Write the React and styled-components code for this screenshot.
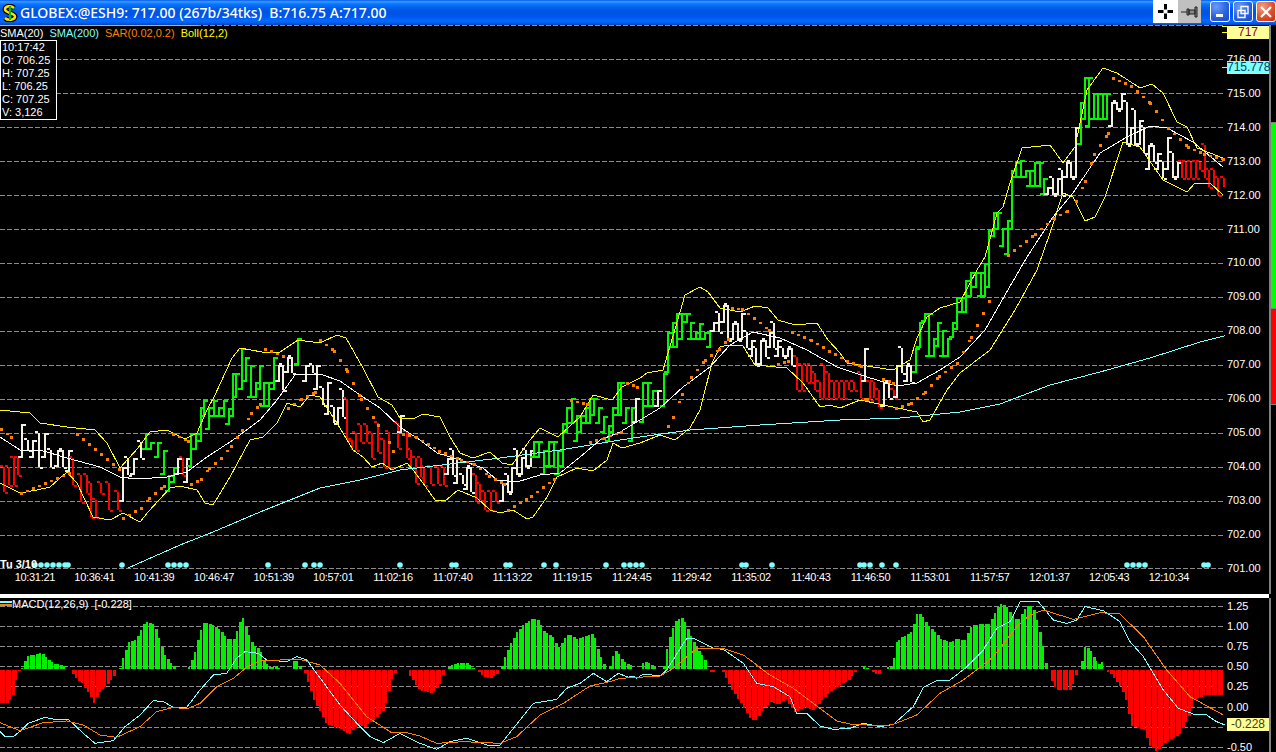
import styled, { createGlobalStyle } from "styled-components";

const GlobalStyle = createGlobalStyle`
  html, body { margin: 0; padding: 0; background: #000; }
  body { font-family: "Liberation Sans", Arial, sans-serif; overflow: hidden; }
`;

const RED = "#ff0000";
const GREEN = "#00f800";
const WHITE = "#f4f0e4";
const CYAN = "#80ffff";
const ORANGE = "#ff8000";
const YELLOW = "#ffff00";

// price bars: x,high,low in page pixels
const barRuns = [
  [RED, "3,467,492 8,467,485 13,458,485 17,458,475"],
  [WHITE, "21,424,458 27,440,450 32,440,458 38,433,467 44,433,458 50,450,467 57,450,467 62,450,467 68,450,472"],
  [RED, "72,458,485 80,475,502 86,475,493 90,483,517 95,500,517 100,483,493 108,483,510 117,492,510"],
  [WHITE, "122,467,502 127,458,475 133,458,475 140,442,458"],
  [GREEN, "145,433,450 150,442,450 157,442,458 163,450,475 168,475,492 173,467,483"],
  [WHITE, "177,458,475"],
  [RED, "182,458,475"],
  [WHITE, "186,458,483"],
  [GREEN, "190,433,467 195,433,450 200,407,442 203,400,417 208,407,430 213,400,417 218,407,417 223,400,417 228,408,425 232,373,417 235,373,398 241,348,390 245,357,382 250,365,398 255,382,398 259,365,390 263,382,407 268,382,407 273,357,390"],
  [WHITE, "278,365,382 282,365,390 287,357,373 291,357,373"],
  [GREEN, "297,338,365"],
  [WHITE, "305,365,382 312,365,373 316,365,390 322,388,405 327,382,415 333,407,423 337,407,425 342,390,417"],
  [RED, "346,399,440 351,440,450 355,433,450 360,425,442 366,425,442 371,433,458 377,423,452 383,440,467 388,432,467 397,423,448"],
  [WHITE, "400,415,433"],
  [RED, "406,432,458 410,450,468 415,458,483 420,458,477 423,467,485 430,467,484 437,467,484 443,467,485"],
  [WHITE, "447,458,475 452,450,475 456,458,484 462,475,484 466,467,490 470,467,492"],
  [RED, "475,475,502 479,484,500 484,492,510 490,492,510 495,492,502"],
  [WHITE, "502,483,502 507,475,493 511,467,493 516,450,475 521,457,475 525,450,467 530,450,467"],
  [GREEN, "533,441,458 538,441,458 543,450,475 548,441,467 553,441,467 557,450,475 562,423,467 566,407,433 571,398,424 576,415,442 580,415,433 585,407,424 589,398,424 593,398,416 598,407,424 603,416,433 608,425,442 612,407,433 617,382,416 620,382,416 625,407,424 631,407,442"],
  [WHITE, "635,398,423"],
  [GREEN, "642,382,423 647,382,407 652,390,407"],
  [WHITE, "657,390,407"],
  [GREEN, "663,373,407 667,332,373 672,322,348 676,313,348 681,313,340 686,313,323 690,322,340 695,332,340 699,323,340 704,332,340 709,330,348"],
  [WHITE, "713,322,332 718,313,332 723,305,323 727,305,340 732,323,340 737,323,340 741,313,340 746,332,348 751,340,357 755,348,365 760,340,365 765,340,357 769,332,348 773,323,348 777,340,357 782,348,357 787,348,357 791,348,365"],
  [RED, "796,357,390 801,365,390 806,365,382 810,365,382 814,373,390 819,382,398 823,365,398 828,373,398 833,382,398 838,382,398 843,382,398 848,382,390 853,382,390 860,373,398"],
  [WHITE, "864,348,382"],
  [RED, "869,382,400 873,382,398 878,390,407"],
  [WHITE, "883,382,407 888,382,398"],
  [RED, "893,390,398"],
  [WHITE, "896,365,398 901,348,373 906,365,382 910,365,382"],
  [GREEN, "915,348,373 919,322,348 924,313,322 928,313,357 933,338,357 937,322,347 942,330,357 947,338,357 952,322,338 956,297,330 961,297,313 965,280,313 970,272,297 975,272,288 980,272,297 984,263,297 988,230,288 993,212,237 997,212,230 1002,228,247 1007,220,255 1011,170,230 1015,162,178 1020,160,178 1025,170,178 1029,170,187 1034,162,187 1039,162,187 1043,178,195"],
  [WHITE, "1047,187,195 1052,178,195 1057,178,195 1061,170,195 1066,162,178 1070,162,178 1075,127,178"],
  [GREEN, "1080,102,145 1084,77,120 1088,77,127 1093,93,120 1097,93,120 1102,93,120 1106,93,120"],
  [WHITE, "1111,102,127 1116,102,110 1121,93,110 1126,102,145 1130,127,145 1134,110,145 1139,120,145 1143,127,153 1148,145,170 1153,145,162 1157,153,170 1162,162,178 1167,137,170 1172,153,178 1177,162,178"],
  [RED, "1181,162,178 1185,162,178 1190,162,178 1195,162,178 1199,162,170 1204,145,178 1208,170,187 1213,170,187 1217,178,195 1223,178,187"],
];

const sma200 = "128,568 180,545 213,532 260,512 320,488 360,480 400,470 450,464 500,458 560,450 620,440 640,437 690,430 760,425 840,420 900,418 960,412 1000,404 1050,385 1100,372 1150,358 1200,342 1228,335";
const sma20 = "0,437 20,450 40,450 67,458 100,467 120,477 137,479 167,477 187,472 207,457 233,440 260,420 277,400 295,375 320,374 340,381 360,395 380,408 400,427 420,440 437,453 460,460 483,468 497,480 517,482 540,475 560,473 580,457 600,440 620,432 640,420 660,408 683,387 710,367 730,345 753,332 780,338 807,350 837,367 867,377 897,386 917,383 940,370 960,357 985,330 1005,295 1027,257 1053,217 1073,193 1100,153 1127,137 1150,126 1167,128 1193,142 1223,167";
const bollUpper = "0,410 30,413 40,423 67,427 95,430 107,443 120,468 138,448 150,432 167,430 185,439 197,433 207,410 215,395 232,358 240,348 262,352 280,352 298,340 320,343 337,335 346,338 363,368 378,397 392,405 400,418 415,418 423,414 440,417 450,437 460,453 473,458 490,452 502,463 512,465 530,440 540,428 558,437 580,417 593,395 612,400 622,387 640,378 647,373 663,370 685,295 700,287 708,292 720,308 740,312 755,306 768,308 778,320 795,325 817,323 828,340 840,353 847,363 893,370 910,360 917,338 927,317 940,308 960,302 977,270 985,257 997,213 1003,207 1010,183 1022,148 1050,145 1063,163 1075,147 1087,90 1103,68 1117,73 1140,88 1152,84 1163,93 1177,122 1187,127 1197,148 1223,158";
const bollLower = "0,483 20,493 37,490 50,487 67,472 77,483 93,517 110,520 123,513 140,522 148,512 170,488 180,486 197,490 205,503 213,505 230,477 250,440 263,437 277,423 287,403 300,407 310,395 320,397 337,423 353,450 363,457 372,467 382,463 392,470 407,463 413,470 423,483 435,500 445,501 458,490 477,498 490,510 500,513 513,510 527,519 533,517 547,497 557,477 577,468 593,471 607,460 613,443 622,448 640,443 660,435 675,440 690,428 700,410 712,363 720,347 728,345 743,346 755,365 787,368 803,383 820,407 830,405 840,408 860,400 893,407 917,412 923,422 930,420 947,390 960,373 990,350 1015,310 1037,270 1050,233 1063,193 1073,197 1085,221 1095,217 1105,197 1123,142 1140,147 1163,180 1187,192 1195,183 1210,183 1223,195";

const sarRuns = [
  "0,428 10,436", "20,492 68,472", "76,433 118,468", "122,517 140,507 148,497 163,485", "172,433 187,440",
  "190,483 200,478 208,467 220,457 230,445 241,429 250,412 259,403", "264,348 282,355", "287,407 300,398 314,391",
  "319,339 333,350 346,370 360,398 377,424", "388,441 392,450", "402,433 415,436 438,450 460,459 473,463 488,475 503,483",
  "507,509 530,495 553,478", "570,399 586,403", "589,441 603,437 620,431", "626,382 636,386",
  "667,425 672,416 681,393 690,376 704,359 718,348 727,338", "731,307 741,308 753,317 768,329", "777,363 787,360",
  "791,331 810,339 828,350 846,360 860,365", "864,398 866,398", "882,378 892,382",
  "895,407 910,402 924,391 938,375 956,362 970,336 988,300", "1007,254 1034,233 1053,217 1066,210",
  "1075,200 1084,180 1093,153 1107,132", "1112,77 1130,85 1149,102 1167,127 1187,146 1203,153 1222,158",
];

const histogram = "0,-33 8,-33 13,-27 17,-7 20,0 22,0 24,6 28,13 30,15 33,13 38,15 42,17 45,13 50,8 55,5 60,5 66,2 68,0 70,0 75,-7 82,-13 90,-25 94,-33 100,-22 108,-15 116,-5 118,0 120,0 122,3 125,15 130,27 137,30 145,45 148,47 155,45 160,30 165,15 172,5 178,0 188,0 190,3 195,15 200,35 205,47 212,45 220,40 228,30 235,30 240,47 243,52 247,40 253,25 260,20 265,7 270,2 278,3 280,0 292,0 295,12 300,3 302,0 305,0 315,-30 328,-55 340,-58 350,-65 358,-55 365,-57 375,-50 385,-40 392,-10 397,0 407,0 412,-8 420,-20 432,-23 440,-15 445,0 448,0 450,4 460,6 468,6 472,3 474,0 477,0 482,-5 488,-8 490,-9 498,-3 500,0 502,0 505,10 510,22 518,37 525,45 532,50 538,50 545,38 553,33 557,25 560,22 565,30 570,35 578,30 585,32 592,35 595,33 600,15 605,4 607,0 610,2 615,18 618,18 622,10 627,5 632,4 635,0 640,0 642,5 645,8 650,6 655,2 660,0 664,2 666,15 670,32 675,47 683,52 690,35 698,20 705,12 709,0 712,-2 716,-2 718,0 723,0 725,-5 733,-20 745,-38 752,-50 757,-50 765,-38 772,-32 780,-35 786,-28 795,-42 805,-38 815,-40 820,-33 830,-22 840,-15 850,-10 855,-2 858,0 862,0 863,3 866,3 868,0 870,0 875,-3 878,-5 880,-3 881,0 885,0 888,2 890,0 893,6 897,27 903,32 910,35 914,40 917,55 922,55 928,45 935,38 942,30 950,27 958,30 965,28 972,43 980,45 990,45 995,55 1000,65 1007,63 1015,50 1020,50 1025,60 1030,65 1035,58 1040,38 1045,15 1047,0 1050,0 1053,-15 1058,-20 1070,-20 1075,-10 1077,0 1079,0 1082,8 1085,22 1090,20 1095,10 1100,5 1103,7 1105,0 1107,0 1113,-5 1118,-12 1122,-18 1127,-30 1132,-55 1135,-57 1145,-60 1150,-75 1158,-82 1160,-78 1170,-70 1180,-65 1190,-45 1195,-30 1205,-25 1225,-25";

// read off 3x crops, so kept in crop coordinates
const macdLine = [
  [0, "0,425 15,440 40,440 65,420 85,400 135,382 165,388 205,388 250,430 285,460 340,452 375,410 420,375 460,332 490,335 520,352 560,352 600,300 640,255 680,250 710,205 735,185 775,190 800,210 860,215 890,200 920,210 950,250 1020,345 1080,410 1110,440 1150,458 1200,430 1260,460"],
  [420, "50,478 90,455 140,445 210,468 240,465 340,340 410,328 440,295 480,280 520,250 560,275 595,250 625,262 640,258 650,265 670,252 720,258 740,240 800,145 820,145 880,175 910,178 970,220 1010,280 1060,290 1110,320 1130,370 1160,370 1200,408 1240,418 1290,415"],
  [850, "40,400 90,410 130,403 190,350 220,292 260,272 300,270 345,235 400,180 440,115 480,95 510,35 565,35 610,90 650,100 680,90 705,50 760,62 810,95 840,155 880,200 940,300 985,355 1030,372 1070,375 1100,395 1125,405"],
];
const signalLine = [
  [0, "0,398 60,422 130,398 200,393 250,405 300,435 350,442 420,410 470,365 520,352 560,357 600,340 650,290 700,265 740,232 780,212 900,208 960,225 1020,280 1100,380 1175,428 1220,428 1260,438"],
  [420, "50,460 130,455 240,460 290,440 360,375 430,340 510,288 570,275 600,265 720,258 760,235 830,175 910,175 970,195 1050,255 1120,295 1200,355 1250,393 1290,402"],
  [850, "100,408 130,403 200,375 270,310 340,270 380,240 430,200 500,110 540,75 580,60 670,88 750,68 810,72 880,140 950,240 1020,320 1120,375"],
];

const markers = [35, 41, 47, 53, 59, 65, 68, 122, 168, 174, 180, 186, 268, 305, 314, 320, 400, 452, 456, 506, 510, 544, 556, 606, 624, 630, 636, 642, 742, 746, 772, 860, 864, 870, 882, 896, 1127, 1133, 1139, 1145, 1204, 1208];

const times = ["10:31:21", "10:36:41", "10:41:39", "10:46:47", "10:51:39", "10:57:01", "11:02:16", "11:07:40", "11:13:22", "11:19:15", "11:24:45", "11:29:42", "11:35:02", "11:40:43", "11:46:50", "11:53:01", "11:57:57", "12:01:37", "12:05:43", "12:10:34"];
const prices = ["716.00", "715.00", "714.00", "713.00", "712.00", "711.00", "710.00", "709.00", "708.00", "707.00", "706.00", "705.00", "704.00", "703.00", "702.00", "701.00"];
const priceGrid = [25, 59, 93, 127, 161, 195, 229, 263, 297, 331, 365, 399, 433, 467, 501, 535, 568];
const macdLabels = ["1.25", "1.00", "0.75", "0.50", "0.25", "0.00", "", "-0.50"];
const macdGrid = [606, 626, 646, 666, 686, 707, 727, 747];
const dataRows = ["10:17:42", "O: 706.25", "H: 707.25", "L: 706.25", "C: 707.25", "V: 3,126"];

const pairs = (s) => s.split(" ").map((p) => p.split(",").map(Number));
const fromCrop = (runs) =>
  runs.map(([ox, s]) => pairs(s).map(([x, y]) => `${ox + x / 3},${590 + y / 3}`).join(" ")).join(" ");

const sample = (s, step = 6) => {
  const pts = pairs(s);
  const out = [];
  for (let i = 0; i < pts.length - 1; i++) {
    const [x0, y0] = pts[i];
    const [x1, y1] = pts[i + 1];
    for (let x = x0; x < x1; x += step) out.push([x, y0 + ((y1 - y0) * (x - x0)) / (x1 - x0)]);
  }
  out.push(pts[pts.length - 1]);
  return out;
};

const histAt = (() => {
  const pts = pairs(histogram);
  return (x) => {
    for (let i = 0; i < pts.length - 1; i++) {
      if (x >= pts[i][0] && x <= pts[i + 1][0]) {
        const [x0, y0] = pts[i];
        const [x1, y1] = pts[i + 1];
        return x1 === x0 ? y0 : y0 + ((y1 - y0) * (x - x0)) / (x1 - x0);
      }
    }
    return 0;
  };
})();

const Frame = styled.div`
  width: 1276px;
  height: 752px;
  display: flex;
  flex-direction: column;
  background: #000;
  overflow: hidden;
`;

const TitleBar = styled.div`
  height: 25px;
  flex: none;
  display: flex;
  align-items: center;
  padding-left: 2px;
  background: linear-gradient(#0058ee 0%, #3593ff 6%, #288eff 10%, #127dff 14%, #036ffc 20%, #0262ee 30%, #0057e5 40%, #0054e3 50%, #0055eb 62%, #005bf5 72%, #026afe 82%, #0062ef 90%, #0052d6 96%, #0040ab 100%);
`;

const Title = styled.span`
  margin-left: 2px;
  color: #fff;
  font: 500 14px "Noto Sans", "Open Sans", sans-serif;
  white-space: pre;
  flex: 1;
`;

const ToolGroup = styled.div`
  display: flex;
  height: 24px;
  align-self: flex-start;
  margin-right: 9px;
`;

const ToolButton = styled.div`
  width: ${(p) => p.$w}px;
  display: flex;
  align-items: center;
  justify-content: center;
  background: ${(p) => p.$bg};
  border-bottom: 1px solid #555;
`;

const WinButton = styled.div`
  width: 20px;
  height: 21px;
  margin-right: 3px;
  border: 1px solid #fff;
  border-radius: 3px;
  box-sizing: border-box;
  display: flex;
  align-items: center;
  justify-content: center;
  align-self: flex-start;
  margin-top: 1px;
  background: ${(p) => (p.$close
    ? "radial-gradient(circle at 30% 25%, #f0a08a, #e0502c 55%, #c03010)"
    : "radial-gradient(circle at 30% 25%, #6d9cf5, #2a62de 55%, #1c48c4)")};
  &:last-child { margin-right: 0; }
`;

const Pane = styled.div`
  display: flex;
  flex: none;
  height: ${(p) => p.$h}px;
`;

const Plot = styled.div`
  position: relative;
  width: 1225px;
  flex: none;
  display: flex;
  flex-direction: column;
`;

const Chart = styled.svg`
  display: block;
  flex: none;
`;

const ToolStrip = styled.div`
  position: absolute;
  left: 0;
  top: 0;
  width: 198px;
  height: 1px;
  background: #b0b0b0;
`;

const Legend = styled.div`
  position: absolute;
  left: 0;
  top: 2px;
  display: flex;
  gap: 6px;
  font-size: 11px;
  line-height: 13px;
  white-space: pre;
`;

const LegendItem = styled.span`
  color: ${(p) => p.$color};
`;

const DataBox = styled.div`
  position: absolute;
  left: 0;
  top: 15px;
  width: 57px;
  height: 80px;
  border: 1px solid #fff;
  background: #000;
  color: #fff;
  font-size: 11px;
  line-height: 13px;
  padding-left: 1px;
  box-sizing: border-box;
`;

const DateTag = styled.span`
  position: absolute;
  left: 0;
  top: 533px;
  color: #fff;
  font-size: 11px;
  font-weight: bold;
  line-height: 13px;
`;

const TimeRow = styled.div`
  display: flex;
  padding-left: 5px;
  height: 24px;
`;

const TimeLabel = styled.span`
  flex: 0 0 59.7px;
  text-align: center;
  color: #fff;
  font-size: 11px;
  letter-spacing: -0.3px;
  line-height: 14px;
`;

const Axis = styled.div`
  position: relative;
  width: 44px;
  flex: none;
  margin-top: ${(p) => p.$shift}px;
  padding: ${(p) => p.$top}px 0 0 2px;
  box-sizing: border-box;
`;

const AxisLabel = styled.div`
  height: ${(p) => p.$h}px;
  display: flex;
  align-items: center;
  color: #fff;
  font-size: 11px;
`;

const ValueTag = styled.div`
  position: absolute;
  left: 2px;
  top: ${(p) => p.$top}px;
  width: 42px;
  height: 13px;
  background: ${(p) => p.$bg};
  color: ${(p) => p.$color};
  font-size: 12px;
  line-height: 13px;
  text-align: center;
  white-space: nowrap;
`;

const TagTick = styled.i`
  position: absolute;
  left: -3px;
  top: ${(p) => p.$top}px;
  width: 5px;
  height: 1px;
  background: ${(p) => p.$color};
`;

const SideRail = styled.div`
  width: 7px;
  flex: none;
  box-sizing: border-box;
  border-left: 2px solid #808080;
  display: flex;
  flex-direction: column;
  padding-top: 97px;
`;

const Level = styled.div`
  height: ${(p) => p.$h}px;
  box-sizing: border-box;
  background: ${(p) => p.$color};
  border-top: 1px solid #808080;
  &:last-child { border-bottom: 1px solid #808080; }
`;

const Divider = styled.div`
  height: 4px;
  flex: none;
  width: 1269px;
  background: #fff;
`;

const MacdTitle = styled.div`
  position: absolute;
  left: 12px;
  top: 0;
  color: #fff;
  font-size: 11px;
  line-height: 13px;
  white-space: pre;
`;

const MacdKey = styled.svg`
  position: absolute;
  left: 0;
  top: 3px;
`;

function Logo() {
  return (
    <svg width="16" height="18" viewBox="0 0 16 18">
      <path d="M12 4C9 1 3 2 3 5.500S13 9 13 12.500S6 17 3 14" fill="none" stroke="#000" strokeWidth="5" />
      <path d="M12 4C9 1 3 2 3 5.500S13 9 13 12.500S6 17 3 14" fill="none" stroke="#ffe000" strokeWidth="2.500" />
      <path d="M8 2V16" stroke="#00c000" strokeWidth="2" />
    </svg>
  );
}

function PriceBars() {
  const rects = [];
  barRuns.forEach(([color, run], r) => {
    pairs(run).forEach(([x, hi, lo], i) => {
      const up = color === GREEN || (color === WHITE && i % 2 === 0);
      const open = up ? lo : hi;
      const close = up ? hi : lo;
      rects.push(
        <path
          key={`${r}-${i}`}
          fill={color}
          d={`M${x} ${hi}h2V${lo}h-2z M${x - 3} ${open - 2}h3v2h-3z M${x + 2} ${close}h3v2h-3z`}
        />
      );
    });
  });
  return <g shapeRendering="crispEdges">{rects}</g>;
}

function GridLines({ rows }) {
  return (
    <g stroke="#8c8c8c" strokeDasharray="5 2" shapeRendering="crispEdges">
      {rows.map((y) => (
        <line key={y} x1="0" x2="1225" y1={y + 0.5} y2={y + 0.5} />
      ))}
    </g>
  );
}

function Line({ points, color, width = 1 }) {
  return <polyline points={points} fill="none" stroke={color} strokeWidth={width} shapeRendering="crispEdges" />;
}

function PriceChart() {
  return (
    <Chart width="1225" height="545" viewBox="0 25 1225 545">
      <GridLines rows={priceGrid} />
      <PriceBars />
      <Line points={sma200} color={CYAN} />
      <Line points={sma20} color="#fff" />
      <Line points={bollUpper} color={YELLOW} />
      <Line points={bollLower} color={YELLOW} />
      <g fill={ORANGE} shapeRendering="crispEdges">
        {sarRuns.flatMap((run, r) =>
          sample(run).map(([x, y], i) => <rect key={`${r}-${i}`} x={x} y={y} width="2.500" height="2.500" />)
        )}
      </g>
      <g fill={CYAN}>
        {markers.map((x) => (
          <circle key={x} cx={x} cy="565" r="2.800" />
        ))}
      </g>
    </Chart>
  );
}

function MacdChart() {
  const cols = [];
  for (let k = 0; k * 2.985 < 1225; k++) {
    const x = k * 2.985;
    const h = histAt(x + 1.5);
    if (Math.abs(h) < 1) continue;
    cols.push(
      <rect
        key={k}
        x={x}
        y={h > 0 ? 669 - h : 670}
        width={k % 2 ? 2 : 3}
        height={Math.abs(h)}
        fill={h > 0 ? "#00f000" : RED}
      />
    );
  }
  return (
    <Chart width="1225" height="154" viewBox="0 598 1225 154">
      <GridLines rows={macdGrid} />
      <g shapeRendering="crispEdges">{cols}</g>
      <Line points={fromCrop(macdLine)} color={CYAN} />
      <Line points={fromCrop(signalLine)} color={ORANGE} />
    </Chart>
  );
}

export default function App() {
  return (
    <Frame>
      <GlobalStyle />
      <TitleBar>
        <Logo />
        <Title>GLOBEX:@ESH9: 717.00 (267b/34tks)  B:716.75 A:717.00</Title>
        <ToolGroup>
          <ToolButton $w={25} $bg="#fff">
            <svg width="15" height="15" viewBox="0 0 15 15">
              <path d="M6 0h3v5.500H6zM6 9.500h3V15H6zM0 6h5.500v3H0zM9.500 6H15v3H9.500z" fill="#000" />
            </svg>
          </ToolButton>
          <ToolButton $w={23} $bg="#c0c0c0">
            <svg width="18" height="14" viewBox="0 0 18 14">
              <path d="M0 7h6M6 4h2v6H6zM8 5h6v4H8zM14 2h2v10h-2z" stroke="#222" strokeWidth="1" fill="#888" />
            </svg>
          </ToolButton>
        </ToolGroup>
        <WinButton>
          <svg width="12" height="12" viewBox="0 0 12 12">
            <rect x="2" y="8" width="7" height="3" fill="#fff" />
          </svg>
        </WinButton>
        <WinButton>
          <svg width="14" height="14" viewBox="0 0 14 14">
            <path d="M5 1.500h7v7H5z M2 5.500h7v7H2z" fill="none" stroke="#fff" strokeWidth="1.300" />
          </svg>
        </WinButton>
        <WinButton $close>
          <svg width="14" height="14" viewBox="0 0 14 14">
            <path d="M2 2L12 12M12 2L2 12" stroke="#fff" strokeWidth="2.200" />
          </svg>
        </WinButton>
      </TitleBar>

      <Pane $h={569}>
        <Plot>
          <PriceChart />
          <TimeRow>
            {times.map((t) => (
              <TimeLabel key={t}>{t}</TimeLabel>
            ))}
          </TimeRow>
          <ToolStrip />
          <Legend>
            <LegendItem $color="#fff">SMA(20)</LegendItem>
            <LegendItem $color={CYAN}>SMA(200)</LegendItem>
            <LegendItem $color={ORANGE}>SAR(0.02,0.2)</LegendItem>
            <LegendItem $color={YELLOW}>Boll(12,2)</LegendItem>
          </Legend>
          <DataBox>
            {dataRows.map((row) => (
              <div key={row}>{row}</div>
            ))}
          </DataBox>
          <DateTag>Tu 3/10</DateTag>
        </Plot>
        <Axis $top={17} $shift={0}>
          {prices.map((p) => (
            <AxisLabel key={p} $h={33.93}>{p}</AxisLabel>
          ))}
          <TagTick $top={1} $color={YELLOW} />
          <TagTick $top={7} $color={YELLOW} />
          <ValueTag $top={1} $bg="#ffff99" $color="#800040">717</ValueTag>
          <TagTick $top={42} $color={CYAN} />
          <ValueTag $top={36} $bg={CYAN} $color="#004060">715.778</ValueTag>
        </Axis>
        <SideRail>
          <Level $h={186} $color="#00ff00" />
          <Level $h={97} $color={RED} />
        </SideRail>
      </Pane>

      <Divider />

      <Pane $h={154}>
        <Plot>
          <MacdChart />
          <MacdKey width="12" height="9" viewBox="0 0 12 9">
            <rect y="0" width="12" height="2" fill={CYAN} />
            <rect y="3" width="12" height="2" fill={ORANGE} />
          </MacdKey>
          <MacdTitle>MACD(12,26,9)  [-0.228]</MacdTitle>
        </Plot>
        <Axis $top={0} $shift={-2}>
          {macdLabels.map((l, i) => (
            <AxisLabel key={i} $h={20.1}>{l}</AxisLabel>
          ))}
          <ValueTag $top={122} $bg="#ffff99" $color="#404000">-0.228</ValueTag>
        </Axis>
        <SideRail />
      </Pane>
    </Frame>
  );
}
